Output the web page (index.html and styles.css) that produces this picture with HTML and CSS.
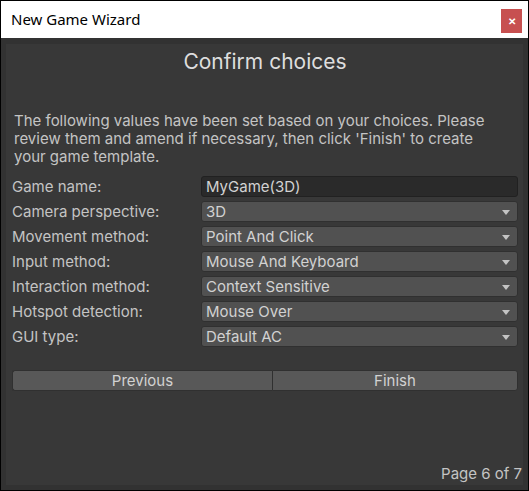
FILE: index.html
```html
<!DOCTYPE html>
<html lang="en">
<head>
  <meta charset="UTF-8">
  <title>New Game Wizard</title>
  <link rel="stylesheet" href="styles.css">
</head>
<body>

<div class="window">
  <div class="titlebar">
    <span class="title">New Game Wizard</span>
    <button class="close" aria-label="Close">&#x2715;</button>
  </div>

  <div class="body">
    <div class="panel">
      <h2>Confirm choices</h2>

      <p class="intro">The following values have been set based on your choices. Please review them and amend if necessary, then click 'Finish' to create your game template.</p>

      <div class="form">
        <div class="row">
          <label>Game name:</label>
          <div class="text-field">MyGame(3D)</div>
        </div>
        <div class="row">
          <label>Camera perspective:</label>
          <div class="dropdown">3D</div>
        </div>
        <div class="row">
          <label>Movement method:</label>
          <div class="dropdown">Point And Click</div>
        </div>
        <div class="row">
          <label>Input method:</label>
          <div class="dropdown">Mouse And Keyboard</div>
        </div>
        <div class="row">
          <label>Interaction method:</label>
          <div class="dropdown">Context Sensitive</div>
        </div>
        <div class="row">
          <label>Hotspot detection:</label>
          <div class="dropdown">Mouse Over</div>
        </div>
        <div class="row">
          <label>GUI type:</label>
          <div class="dropdown">Default AC</div>
        </div>
      </div>

      <div class="nav">
        <button class="nav-btn">Previous</button>
        <button class="nav-btn">Finish</button>
      </div>

      <div class="page">Page 6 of 7</div>
    </div>
  </div>
</div>

</body>
</html>
```

FILE: styles.css
```css
* {
  box-sizing: border-box;
}
body {
  margin: 0;
  font-family: Inter, 'Noto Sans', sans-serif;
  background: #fff;
}
.window {
  width: 529px;
  height: 491px;
  border: 1px solid #000;
  display: flex;
  flex-direction: column;
  background: #323232;
}
.titlebar {
  height: 37px;
  background: #fff;
  display: flex;
  align-items: center;
  justify-content: space-between;
  padding: 0 6px 0 10px;
}
.title {
  font-family: 'Noto Sans', sans-serif;
  font-size: 15px;
  color: #000;
  margin-top: -2px;
}
.close {
  width: 21px;
  height: 24px;
  margin-top: 3px;
  background: #c75050;
  color: #fff;
  border: none;
  font-size: 10px;
  font-weight: 700;
  padding: 0;
}
.body {
  flex: 1;
  padding: 6px 5px 5px 5px;
  display: flex;
}
.panel {
  flex: 1;
  background: #383838;
  padding: 0 5px 2px 6px;
  display: flex;
  flex-direction: column;
  color: #c4c4c4;
}
h2 {
  margin: 6px 0 0;
  text-align: center;
  font-size: 21px;
  font-weight: 400;
  color: #dedede;
  line-height: 24px;
}
.intro {
  margin: 38px 14px 0 2px;
  font-size: 15px;
  line-height: 18px;
}
.form {
  margin-top: 10px;
  display: flex;
  flex-direction: column;
  gap: 4px;
}
.row {
  display: flex;
  align-items: center;
  height: 21px;
}
.row label {
  width: 189px;
  font-size: 15px;
}
.text-field {
  flex: 1;
  height: 21px;
  background: #2a2a2a;
  border: 1px solid #212121;
  border-radius: 3px;
  padding: 0 4px;
  font-size: 15px;
  line-height: 19px;
  color: #d2d2d2;
}
.dropdown {
  flex: 1;
  height: 21px;
  background: #515151;
  border: 1px solid #303030;
  border-radius: 3px;
  padding: 0 4px;
  font-size: 15px;
  line-height: 19px;
  color: #d2d2d2;
  position: relative;
}
.dropdown::after {
  content: '';
  position: absolute;
  right: 7px;
  top: 8px;
  border-left: 4px solid transparent;
  border-right: 4px solid transparent;
  border-top: 5px solid #c4c4c4;
}
.nav {
  margin-top: 23px;
  display: flex;
}
.nav-btn {
  flex: 1;
  height: 21px;
  background: #585858;
  border: 1px solid #303030;
  color: #d2d2d2;
  font-family: Inter, 'Noto Sans', sans-serif;
  font-size: 15px;
  padding: 0;
}
.nav-btn:first-child {
  border-radius: 3px 0 0 3px;
  border-right: none;
  flex: 0 0 260px;
}
.nav-btn:last-child {
  border-radius: 0 3px 3px 0;
}
.page {
  margin-top: auto;
  margin-right: -4px;
  text-align: right;
  font-size: 15px;
  color: #c4c4c4;
}
```
